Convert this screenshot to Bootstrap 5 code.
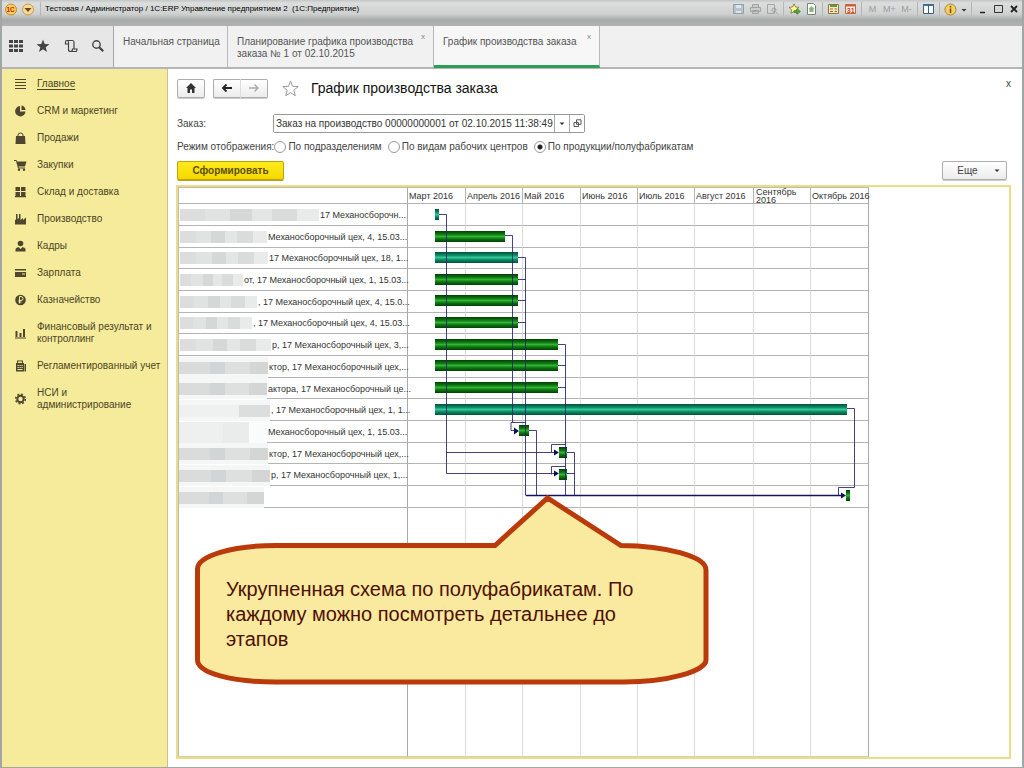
<!DOCTYPE html>
<html lang="ru">
<head>
<meta charset="utf-8">
<meta name="viewport" content="width=device-width, initial-scale=1">
<title>График производства заказа</title>
<link href="https://cdn.jsdelivr.net/npm/bootstrap@5.3.0/dist/css/bootstrap.min.css" rel="stylesheet">
<style>
body{font-family:"Liberation Sans",Arial,sans-serif;font-size:10px;line-height:12px;color:#444;background:#fff;border:solid #a3a6a6;border-width:0 2px 2px}
svg{display:block;flex:none}
button,input{font-family:inherit}
.titlebar{height:26px;padding:0 2px 8px 2px;background:linear-gradient(#c3c6c6 0,#dcdede 3px,#cfd1d1 14px,#a9abab 20px,#b1b3b3 26px);color:#222}
.titlebar button,.tools button,.closer{border:0;background:none;padding:0;line-height:12px;color:inherit}
.app-title{font-size:8px;color:#000}
.titlebar .mem{color:#9a9d9d;font-size:9px;width:13px}
.vsep{width:1px;height:14px;background:#b4b7b7}
.tabs{height:43px;background:#f0f0f0;border-bottom:2px solid #b5b5b5}
.tools{width:112px;background:#e7e7e7;border-right:1px solid #a5a5a5;color:#444;padding:0 8px 2px 7px}
.tab{border-right:1px solid #b8b8b8;padding:10px 9px 0;color:#555;text-decoration:none;background:#f1f1f1;position:relative;display:block;white-space:nowrap}
.tab.on{background:#f7f7f7;border-bottom:3px solid #2f9e56;margin-bottom:-1px}
.tab-x{position:absolute;top:6px;right:8px;font-size:8px;line-height:10px;color:#888}
.side{width:166px;padding-top:2px;background:#f6eb9a;border-right:1px solid #c9c193}
.side a{display:flex;align-items:center;gap:10px;padding:7px 6px 8px 12px;color:#4a4524;text-decoration:none}
.side a.on span{text-decoration:underline;text-underline-offset:2px}
.side svg{color:#4d4730}
.main{padding:9px 11px 8px 9px}
.flatbtn{border:1px solid #adadad;border-radius:2px;background:linear-gradient(#fff,#ececec);height:19px;color:#444;box-shadow:0 1px 0 #ccc;padding:0;display:flex;align-items:center;justify-content:center}
.flatbtn.l{border-radius:2px 0 0 2px;border-right-color:#ddd}.flatbtn.r{border-radius:0 2px 2px 0;border-left:0}
.fav{margin:0 12px 0 14px}
h1{font-size:14px;line-height:20px;color:#111;margin:0}
.combo{width:312px;border:1px solid #999;border-radius:2px;height:19px}
.combo input{border:0;padding:0 1px 0 2px;font-size:10px;color:#333;min-width:0}
.combo button{border:0;border-left:1px solid #aaa;background:#fff;padding:0;width:15px;display:flex;align-items:center;justify-content:center}
.modes{gap:6px}
.opt{display:flex;align-items:center;gap:2px}
.opt input{appearance:none;width:12px;height:12px;border:1px solid #999;border-radius:50%;margin:0;background:#fff}
.opt input:checked{background:radial-gradient(#222 0 2px,#fff 3px)}
.go{width:107px;background:linear-gradient(#ffea20,#f5d800);border-color:#bfa500;color:#5c4f00;font-weight:bold;box-shadow:0 1px 0 #b8a030}
.more{width:65px}
.pane{border:2px solid #e9dd8c;margin:5px 0 0 -1px}
.gantt{width:691px;position:relative}
.gantt table{table-layout:fixed;width:100%;border-collapse:separate;border-spacing:0;font-size:9px;line-height:10px;color:#333}
.gantt th,.gantt td{padding:0;font-weight:normal;border-right:1px solid #dcdcdc;border-bottom:1px solid #b4b4b4}
.gantt thead th{height:17px;border-color:#b4b4b4;border-top:1px solid #c9b9a0}
.gantt th:first-child,.gantt td:first-child{border-right-color:#aaa;border-left:1px solid #bbb}
.gantt th:last-child,.gantt td:last-child{border-right-color:#aaa}
.gantt tbody tr{height:22px}.gantt tbody tr:nth-child(3n){height:21px}
.gantt tbody tr.rest{height:249px}.gantt tr.rest td{border-bottom-color:#d8cf9a}
.month{height:15px;display:flex;align-items:center;padding-left:1px;white-space:nowrap}
.month.two{white-space:normal;line-height:8px;padding-left:2px}
.work{display:flex;align-items:center;height:20px;white-space:nowrap}
.mosaic{flex:none;height:12px;margin:0 1px;background:linear-gradient(90deg,#dcdede 0 18%,#e1e3e3 18% 36%,#d6d8d8 36% 52%,#e4e6e6 52% 66%,#dadcdc 66% 84%,#e9ebeb 84%)}
.mosaic.tall{height:21px;margin:0 1px 0 0;background:linear-gradient(#f5f6f6 0 5px,transparent 5px 17px,#f5f6f6 17px),linear-gradient(90deg,#dadcdc 0 35%,#d2d5d5 35% 52%,#dee0e0 52% 80%,#d4d6d6 80%)}
.mosaic.faint{background:linear-gradient(#f5f6f6 0 5px,transparent 5px 17px,#f5f6f6 17px),linear-gradient(90deg,#eff1f1 0 66%,#dcdede 66%)}
.mosaic.pale{background:linear-gradient(90deg,#eef0f0 0 50%,#eaecec 50% 80%,#fafbfb 80%)}
.work.cover{height:21px;margin-bottom:-1px;position:relative}
.links{position:absolute;left:230px;top:16px}
.callout{position:absolute;left:16px;top:308px;width:515px;height:190px}
.callout svg{position:absolute;left:0;top:0}
.callout p{position:relative;margin:0;padding:82px 60px 0 32px;font-size:20px;line-height:25px;color:#4f1000}
</style>
</head>
<body class="d-flex flex-column min-vh-100">
<header class="titlebar d-flex align-items-center">
  <svg width="32" height="16" viewBox="0 0 32 16"><circle cx="7" cy="8.500" r="5.500" fill="#f9cf55" stroke="#c98a2a"/><text x="2.500" y="11" font-size="6.500" font-weight="bold" fill="#c22">1С</text><circle cx="24" cy="8.500" r="5.500" fill="#f4d99a" stroke="#c99a4a"/><path d="M20.500 7h7l-3.500 4z" fill="#6b4a14"/></svg>
  <span class="vsep ms-1 me-1"></span>
  <span class="app-title me-auto">Тестовая / Администратор / 1С:ERP Управление предприятием 2&nbsp; (1С:Предприятие)</span>
  <div class="d-flex align-items-center gap-1">
    <button aria-label="Сохранить"><svg width="13" height="12" viewBox="0 0 13 12"><path d="M1.500 1.500h10v9h-10z" fill="#b9c4ca" stroke="#8fa0a8"/><path d="M4 2h5v3H4zM4 8h5v2H4z" fill="#dfe5e8"/></svg></button>
    <button aria-label="Печать"><svg width="13" height="12" viewBox="0 0 13 12" fill="#c8caca" stroke="#a2a4a4"><path d="M3.500 1.500h6v3h-6zM1.500 4.500h10v4h-10zM3.500 7.500h6v3h-6z"/></svg></button>
    <button aria-label="Просмотр"><svg width="13" height="12" viewBox="0 0 13 12" fill="none" stroke="#a2a4a4"><path d="M1.500 1.500h7v9h-7z"/><circle cx="8" cy="7" r="2"/><path d="M9.500 8.500l2.500 3"/></svg></button>
    <span class="vsep"></span>
    <button aria-label="В избранное"><svg width="13" height="12" viewBox="0 0 13 12"><path d="M6 .800l1.500 3.200 3.500.400-2.600 2.400.700 3.500L6 8.600 2.900 10.300l.700-3.500L1 4.400 4.500 4z" fill="#fdf3a0" stroke="#7a7a20" stroke-width=".8"/><path d="M6 7.500h3V5.500l3.500 3L9 11.500V9.500H6z" fill="#5aa63a" stroke="#2d6d1c" stroke-width=".5"/></svg></button>
    <button aria-label="Ссылка"><svg width="13" height="12" viewBox="0 0 13 12"><path d="M2.500.500h6l2 2v9h-8z" fill="#fff" stroke="#758575"/><path d="M6.500 3l3 3h-1v3h-4V6h-1z" fill="#8db07c"/></svg></button>
    <span class="vsep"></span>
    <button aria-label="Калькулятор"><svg width="13" height="12" viewBox="0 0 13 12"><path d="M1.500 1.500h10v9h-10z" fill="#f3ecc0" stroke="#8a7440"/><path d="M3 3h7" stroke="#5a9a3a" stroke-width="2"/><path d="M3 6h3M3 8.500h3M7.500 6H10M7.500 8.500H10" stroke="#b05a2a"/></svg></button>
    <button aria-label="Календарь"><svg width="13" height="12" viewBox="0 0 13 12"><path d="M1.500 1.500h10v9h-10z" fill="#fff0e6" stroke="#c06a4a"/><path d="M1.500 2.500h10" stroke="#d2583a" stroke-width="2"/><text x="2.800" y="10" font-size="7" font-weight="bold" fill="#d2381a">31</text></svg></button>
    <span class="vsep"></span>
    <button class="mem">M</button><button class="mem">M+</button><button class="mem">M-</button>
    <span class="vsep"></span>
    <button aria-label="Панели"><svg width="13" height="12" viewBox="0 0 13 12"><path d="M1.500 1.500h10v9h-10z" fill="#fff" stroke="#3c5f7c"/><path d="M1 2h11" stroke="#3c6f9c" stroke-width="2"/><path d="M6.500 2v9" stroke="#3c5f7c"/></svg></button>
    <span class="vsep"></span>
    <button class="d-flex align-items-center gap-1" aria-label="Справка"><svg width="13" height="13" viewBox="0 0 13 13"><circle cx="6.500" cy="6.500" r="5.500" fill="#f6cf5c" stroke="#a8843a"/><path d="M6.500 3v1.500M6.500 5.500v4.500" stroke="#6a4a10" stroke-width="1.500"/></svg><svg width="6" height="6" viewBox="0 0 6 6"><path d="M.500 3h5l-2.500 2.500z" fill="#333"/></svg></button>
    <span class="vsep"></span>
    <button aria-label="Свернуть"><svg width="12" height="12" viewBox="0 0 12 12"><path d="M4 9.500h5" stroke="#222" stroke-width="1.500"/></svg></button>
    <button aria-label="Развернуть"><svg width="12" height="12" viewBox="0 0 12 12"><path d="M2.500 2.500h8v7h-8z" fill="none" stroke="#333"/></svg></button>
    <button aria-label="Закрыть"><svg width="12" height="12" viewBox="0 0 12 12"><path d="M3 3l6 6M9 3l-6 6" stroke="#222" stroke-width="1.800"/></svg></button>
  </div>
</header>
<nav class="tabs d-flex">
  <div class="tools d-flex align-items-center justify-content-between">
    <button aria-label="Меню"><svg width="14" height="14" viewBox="0 0 14 14" fill="currentColor"><path d="M0 1h4v3H0zM5 1h4v3H5zM10 1h4v3h-4zM0 5.500h4v3H0zM5 5.500h4v3H5zM10 5.500h4v3h-4zM0 10h4v3H0zM5 10h4v3H5zM10 10h4v3h-4z"/></svg></button>
    <button aria-label="Избранное"><svg width="14" height="14" viewBox="0 0 14 14" fill="currentColor"><path d="M7 .500l1.700 4.500 4.800.200-3.800 3 1.300 4.700L7 10.200l-4 2.700 1.300-4.700L.500 5.200l4.800-.200z"/></svg></button>
    <button aria-label="История"><svg width="14" height="14" viewBox="0 0 14 14" fill="none" stroke="currentColor" stroke-width="1.200"><path d="M4.500 5H1.500V3Q1.500 1.500 3 1.500H8.500Q10 1.500 10 3.500V9.500M3 1.500Q4.500 1.500 4.500 3.500V10.500Q4.500 12.500 6.500 12.500H11.500Q13 12.500 13 10H8.500Q8.500 12.500 6.500 12.500"/></svg></button>
    <button aria-label="Поиск"><svg width="14" height="14" viewBox="0 0 14 14" fill="none" stroke="currentColor"><circle cx="5.500" cy="5.500" r="3.700" stroke-width="1.400"/><path d="M8.200 8.200l4 4" stroke-width="2.200"/></svg></button>
  </div>
  <a class="tab" href="#" style="width:114px">Начальная страница</a>
  <a class="tab" href="#" style="width:206px">Планирование графика производства<br>заказа № 1 от 02.10.2015<span class="tab-x">x</span></a>
  <a class="tab on" href="#" style="width:166px">График производства заказа<span class="tab-x">x</span></a>
</nav>
<div class="d-flex flex-grow-1">
<aside class="side flex-shrink-0">
  <a class="on" href="#"><svg width="13" height="12" viewBox="0 0 13 12" stroke="currentColor" stroke-width="1.200"><path d="M1 1.500h11M1 4.500h11M1 7.500h11M1 10.500h11"/></svg><span>Главное</span></a>
  <a href="#"><svg width="13" height="12" viewBox="0 0 13 12" fill="currentColor"><path d="M6 1v5.500h5.500A5.200 5.200 0 1 1 6 1zM7.500.500A5 5 0 0 1 11.500 5h-4z"/></svg><span>CRM и маркетинг</span></a>
  <a href="#"><svg width="13" height="12" viewBox="0 0 13 12" fill="currentColor"><path d="M2 4h9l.500 8h-10z"/><path d="M4 5V3q0-2 2.500-2T9 3v2" fill="none" stroke="currentColor"/></svg><span>Продажи</span></a>
  <a href="#"><svg width="13" height="12" viewBox="0 0 13 12" fill="currentColor"><path d="M0 1h2.500l.500 1.500h9.500L11 7.500H4.500l.300 1H11v1H4L2 2H0z"/><circle cx="5" cy="10.800" r="1.200"/><circle cx="10" cy="10.800" r="1.200"/></svg><span>Закупки</span></a>
  <a href="#"><svg width="13" height="12" viewBox="0 0 13 12" fill="currentColor"><path d="M1.500 1H6v4H1.500zM7 1h4.500v4H7zM1.500 6H6v4H1.500zM7 6h4.500v4H7zM1 10h11v1.200H1z"/></svg><span>Склад и доставка</span></a>
  <a href="#"><svg width="13" height="12" viewBox="0 0 13 12" fill="currentColor"><path d="M1 11.500V7l1-.500V1h1.500v5L5 5V1h1.500v6L9 5v2l3-2.500v7z"/></svg><span>Производство</span></a>
  <a href="#"><svg width="13" height="12" viewBox="0 0 13 12" fill="currentColor"><circle cx="6.500" cy="3.500" r="2.800"/><path d="M1.500 11.500V9q0-1 3-2l2 2 2-2q3 1 3 2v2.500z"/></svg><span>Кадры</span></a>
  <a href="#"><svg width="13" height="12" viewBox="0 0 13 12" fill="currentColor"><path d="M1 2h11v1.500H1zM1 5h11v5H1z"/><path d="M8 7h3" stroke="#f6eb9a"/></svg><span>Зарплата</span></a>
  <a href="#"><svg width="13" height="12" viewBox="0 0 13 12"><circle cx="6.500" cy="6" r="5.300" fill="currentColor"/><path d="M5.500 9.500v-7H7a1.800 1.800 0 0 1 0 4H4.500M4.500 8H7.500" fill="none" stroke="#f6eb9a"/></svg><span>Казначейство</span></a>
  <a href="#"><svg width="13" height="12" viewBox="0 0 13 12" fill="currentColor"><path d="M1.500 4h2v6h-2zM5.500 6h2v4h-2zM9 2h2v8H9zM1 10.500h11v1H1z"/></svg><span>Финансовый результат и контроллинг</span></a>
  <a href="#"><svg width="13" height="12" viewBox="0 0 13 12" fill="currentColor"><path fill-rule="evenodd" d="M3 .500h6V3h1v8.500H2V3h1zM4 1.500V3h4V1.500zM3.500 5h1.200v1H3.500zM5.500 5h1.200v1H5.500zM7.500 5h1.200v1H7.500zM3.500 7h1.200v1H3.500zM5.500 7h1.200v1H5.500zM7.500 7h1.200v1H7.500zM3.500 9h5v1h-5z"/><path d="M10.500 4H12v7.500h-1.500z"/></svg><span class="text-nowrap">Регламентированный учет</span></a>
  <a href="#"><svg width="13" height="12" viewBox="0 0 13 12"><circle cx="6.500" cy="6" r="3.200" fill="none" stroke="currentColor" stroke-width="2"/><circle cx="6.500" cy="6" r="4.800" fill="none" stroke="currentColor" stroke-width="1.600" stroke-dasharray="1.900 1.870"/></svg><span>НСИ и<br>администрирование</span></a>
</aside>
<main class="main flex-grow-1 d-flex flex-column">
  <div class="d-flex align-items-center">
    <button class="flatbtn" style="width:28px" aria-label="Домой"><svg width="12" height="12" viewBox="0 0 12 12"><path d="M6 1l5 5H9.500v5h-2.500V7.500H5V11H2.500V6H1z" fill="#333"/></svg></button>
    <div class="d-flex ms-2">
      <button class="flatbtn l" style="width:28px" aria-label="Назад"><svg width="12" height="12" viewBox="0 0 12 12" fill="none" stroke="#222" stroke-width="1.800"><path d="M11 6H2M5.500 2.500L2 6l3.500 3.500"/></svg></button>
      <button class="flatbtn r" style="width:27px" aria-label="Вперед"><svg width="12" height="12" viewBox="0 0 12 12" fill="none" stroke="#aaa" stroke-width="1.400"><path d="M1 6h9M6.500 2.500L10 6 6.500 9.500"/></svg></button>
    </div>
    <svg class="fav" width="17" height="17" viewBox="0 0 17 17"><path d="M8.500 1l2 5.300 5.700.300-4.400 3.600 1.500 5.500-4.800-3.100-4.800 3.100 1.500-5.500L.800 6.600l5.700-.300z" fill="#fff" stroke="#999"/></svg>
    <h1 class="me-auto fw-normal">График производства заказа</h1>
    <button class="closer align-self-start" aria-label="Закрыть форму">x</button>
  </div>
  <div class="d-flex align-items-center mt-3">
    <label for="order" style="width:96px">Заказ:</label>
    <div class="combo d-flex"><input id="order" class="flex-grow-1" value="Заказ на производство 00000000001 от 02.10.2015 11:38:49"><button aria-label="Выбрать"><svg width="6" height="4" viewBox="0 0 6 4"><path d="M.500.500h5L3 3z" fill="#333"/></svg></button><button aria-label="Открыть"><svg width="9" height="9" viewBox="0 0 9 9" fill="#fff" stroke="#555"><path d="M1 3.500h4.500v4H1zM3.500.800H8v4.500H3.500z"/></svg></button></div>
  </div>
  <div class="d-flex align-items-center mt-2 modes">
    <div class="d-flex"><span>Режим отображения:</span>
    <label class="opt"><input type="radio" name="mode">По подразделениям</label></div>
    <label class="opt"><input type="radio" name="mode">По видам рабочих центров</label>
    <label class="opt"><input type="radio" name="mode" checked>По продукции/полуфабрикатам</label>
  </div>
  <div class="d-flex justify-content-between mt-2 pe-1">
    <button class="flatbtn go">Сформировать</button>
    <button class="flatbtn more gap-3"><span class="ps-2">Еще</span><svg width="6" height="4" viewBox="0 0 6 4"><path d="M.500.500h5L3 3z" fill="#333"/></svg></button>
  </div>
  <div class="pane flex-grow-1">
    <div class="gantt">
      <table>
        <colgroup><col style="width:230px"><col style="width:58px"><col style="width:57px"><col style="width:58px"><col style="width:57px"><col style="width:57px"><col style="width:59px"><col style="width:57px"><col style="width:58px"></colgroup>
        <thead><tr><th></th><th><div class="month">Март 2016</div></th><th><div class="month">Апрель 2016</div></th><th><div class="month">Май 2016</div></th><th><div class="month">Июнь 2016</div></th><th><div class="month">Июль 2016</div></th><th><div class="month">Август 2016</div></th><th><div class="month two">Сентябрь 2016</div></th><th><div class="month">Октябрь 2016</div></th></tr></thead>
        <tbody id="rows"></tbody>
      </table>
      <svg class="links" width="461" height="304" viewBox="408 203 461 304">
        <defs>
          <linearGradient id="gr" x2="0" y2="1"><stop offset="0" stop-color="#053d05"/><stop offset=".3" stop-color="#0c7a10"/><stop offset=".5" stop-color="#35b135"/><stop offset=".7" stop-color="#0c7a10"/><stop offset="1" stop-color="#053d05"/></linearGradient>
          <linearGradient id="te" x2="0" y2="1"><stop offset="0" stop-color="#045038"/><stop offset=".3" stop-color="#0a8c64"/><stop offset=".5" stop-color="#35c79a"/><stop offset=".7" stop-color="#0a8c64"/><stop offset="1" stop-color="#045038"/></linearGradient>
        </defs>
        <g id="bars"></g>
        <g fill="none" stroke="#23236e" stroke-opacity=".85">
          <path d="M439 214.500h7.500v259h108M446.500 452.500h108"/>
          <path d="M505 235.500h7.500v187M526 422.500h-15v8h5"/>
          <path d="M518 257.500h7.500v238M518 279.500h8M518 300.500h8M518 322.500h8M529 430.500h7.500v65"/>
          <path d="M558 344.500h7.500v151M558 365.500h8M558 387.500h8M565.500 444.500h-14v8M565.500 466.500h-14v8M567 452.500h7.500v43M567 473.500h8"/>
          <path d="M847 408.500h7.500v79h-16v8"/>
        </g>
        <path d="M526 495.500h318" stroke="#14145e" stroke-width="1.500"/>
        <path d="M514 427.500l5 3.500-5 3.500zM554 449.500l5 3-5 3zM554 470.500l5 3-5 3zM841 492.500l5 3-5 3z" fill="#0e0e5e"/>
      </svg>
      <div class="callout">
        <svg width="515" height="190" viewBox="194 495 515 190"><path d="M276 545.500H495L547.500 498 621 545.500C665 546 706 556 706 570V660C706 671 668 682 624 682H276C232 682 197.500 673 197.500 660V569C197.500 556 232 545.500 276 545.500Z" fill="#f9eaa0" stroke="#bb3a0c" stroke-width="5"/></svg>
        <p>Укрупненная схема по полуфабрикатам. По каждому можно посмотреть детальнее до этапов</p>
      </div>
    </div>
  </div>
</main>
</div>
<script>
// mosaic width, mosaic style, caption
const rows=[[139,'','17 Механосборочн...'],[87,'','Механосборочный цех, 4, 15.03...'],[88,'','17 Механосборочный цех, 18, 1...'],[63,'','от, 17 Механосборочный цех, 1, 15.03...'],[77,'',', 17 Механосборочный цех, 4, 15.0...'],[72,'',', 17 Механосборочный цех, 4, 15.03...'],[91,'','р, 17 Механосборочный цех, 3,...'],[89,'tall','ктор, 17 Механосборочный цех,...'],[88,'tall','актора, 17 Механосборочный це...'],[91,'tall faint',', 17 Механосборочный цех, 1, 1...'],[88,'tall pale','Механосборочный цех, 1, 15.03...'],[89,'tall','ктор, 17 Механосборочный цех,...'],[91,'tall','р, 17 Механосборочный цех, 1,...'],[85,'tall','']];
document.getElementById('rows').innerHTML=rows.map(([w,k,t])=>`<tr><td><div class="work ${k?'cover':''}"><span class="mosaic ${k}" style="width:${w}px"></span><span>${t}</span></div></td>${'<td></td>'.repeat(8)}</tr>`).join('')+`<tr class="rest">${'<td></td>'.repeat(9)}</tr>`;
// start, end, middle line, gradient
const bars=[[435,439,214,'te'],[435,505,236,'gr'],[435,518,257,'te'],[435,518,279,'gr'],[435,518,300,'gr'],[435,518,322,'gr'],[435,558,344,'gr'],[435,558,365,'gr'],[435,558,387,'gr'],[435,847,409,'te'],[519,529,430,'gr'],[559,567,452,'gr'],[559,567,474,'gr'],[846,850,495,'gr']];
document.getElementById('bars').innerHTML=bars.map(([a,b,y,g])=>`<rect x="${a}" y="${y-5}" width="${b-a}" height="11" fill="url(#${g})"/>`).join('');
</script>
<script src="https://cdn.jsdelivr.net/npm/bootstrap@5.3.0/dist/js/bootstrap.bundle.min.js"></script>
</body>
</html>
